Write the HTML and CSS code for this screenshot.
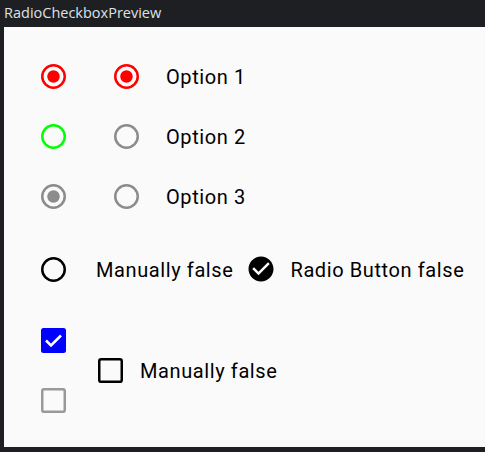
FILE: index.html
```html
<!DOCTYPE html>
<html>
<head>
<meta charset="utf-8">
<link rel="stylesheet" href="styles.css">
</head>
<body>
<div class="titlebar">RadioCheckboxPreview</div>
<div class="window">
  <div class="row">
    <div class="target"><svg class="radio" viewBox="0 0 20 20"><circle cx="10" cy="10" r="9" fill="none" stroke="#ff0000" stroke-width="2"/><circle cx="10" cy="10" r="5" fill="#ff0000"/></svg></div>
    <div class="target col2"><svg class="radio" viewBox="0 0 20 20"><circle cx="10" cy="10" r="9" fill="none" stroke="#ff0000" stroke-width="2"/><circle cx="10" cy="10" r="5" fill="#ff0000"/></svg></div>
    <span class="label opt">Option 1</span>
  </div>
  <div class="row">
    <div class="target"><svg class="radio" viewBox="0 0 20 20"><circle cx="10" cy="10" r="9" fill="none" stroke="#00ff00" stroke-width="2"/></svg></div>
    <div class="target col2"><svg class="radio" viewBox="0 0 20 20"><circle cx="10" cy="10" r="9" fill="none" stroke="#8c8c8c" stroke-width="2"/></svg></div>
    <span class="label opt">Option 2</span>
  </div>
  <div class="row">
    <div class="target"><svg class="radio" viewBox="0 0 20 20"><circle cx="10" cy="10" r="9" fill="none" stroke="#8c8c8c" stroke-width="2"/><circle cx="10" cy="10" r="5" fill="#8c8c8c"/></svg></div>
    <div class="target col2"><svg class="radio" viewBox="0 0 20 20"><circle cx="10" cy="10" r="9" fill="none" stroke="#8c8c8c" stroke-width="2"/></svg></div>
    <span class="label opt">Option 3</span>
  </div>
  <div class="row row4">
    <div class="target"><svg class="radio" viewBox="0 0 20 20"><circle cx="10" cy="10" r="9" fill="none" stroke="#000" stroke-width="2"/></svg></div>
    <span class="label manual">Manually false</span>
    <svg class="check-icon" viewBox="0 0 24 24"><path d="M12 2C6.480 2 2 6.48 2 12s4.48 10 10 10 10-4.48 10-10S17.52 2 12 2zm-2 15l-5-5 1.41-1.41L10 14.17l7.590-7.59L19 8l-9 9z" fill="#000"/></svg>
    <span class="label rb">Radio Button false</span>
  </div>
  <div class="cb-section">
    <div class="cb-col">
      <div class="target"><svg class="cbox" viewBox="0 0 20 20"><rect x="0" y="0" width="20" height="20" rx="2" fill="#0000ff"/><polyline points="4,10 8,14 16,6" fill="none" stroke="#fff" stroke-width="2"/></svg></div>
      <div class="target"><svg class="cbox" viewBox="0 0 20 20"><rect x="1" y="1" width="18" height="18" rx="1.5" fill="none" stroke="#999" stroke-width="2"/></svg></div>
    </div>
    <div class="cb-mid">
      <svg class="cbox" viewBox="0 0 20 20"><rect x="1" y="1" width="18" height="18" rx="1.5" fill="none" stroke="#000" stroke-width="2"/></svg>
      <span class="label cb-label">Manually false</span>
    </div>
  </div>
</div>
</body>
</html>
```
FILE: styles.css
```css
html, body {
  margin: 0;
  padding: 0;
  background: #1e1f22;
}
body {
  width: 485px;
  height: 452px;
  overflow: hidden;
}
.titlebar {
  height: 27px;
  line-height: 25px;
  padding-left: 4px;
  color: #dfe1e5;
  font-family: "Open Sans", "DejaVu Sans", sans-serif;
  font-size: 14.5px;
}
.window {
  margin-left: 4px;
  height: 401px;
  background: #fafafa;
  padding: 19px 0 0 19px;
  font-family: Roboto, "Noto Sans", sans-serif;
}
.row {
  display: flex;
  align-items: center;
  height: 60px;
}
.target {
  width: 60px;
  height: 60px;
  display: flex;
  align-items: center;
  justify-content: center;
}
.col2 {
  margin-left: 13px;
}
.radio {
  width: 25px;
  height: 25px;
  display: block;
}
.label {
  font-size: 20px;
  color: #000;
  letter-spacing: 0.6px;
  white-space: nowrap;
  padding-top: 2px;
}
.opt {
  margin-left: 10px;
}
.row4 {
  margin-top: 13px;
}
.manual {
  margin-left: 13px;
}
.check-icon {
  width: 30px;
  height: 30px;
  display: block;
  margin-left: 13px;
}
.rb {
  margin-left: 14px;
}
.cb-section {
  display: flex;
  align-items: center;
  margin-top: 11px;
}
.cb-col {
  display: flex;
  flex-direction: column;
}
.cbox {
  width: 25px;
  height: 25px;
  display: block;
}
.cb-mid {
  display: flex;
  align-items: center;
  margin-left: 15px;
}
.cb-label {
  margin-left: 17px;
}
```
